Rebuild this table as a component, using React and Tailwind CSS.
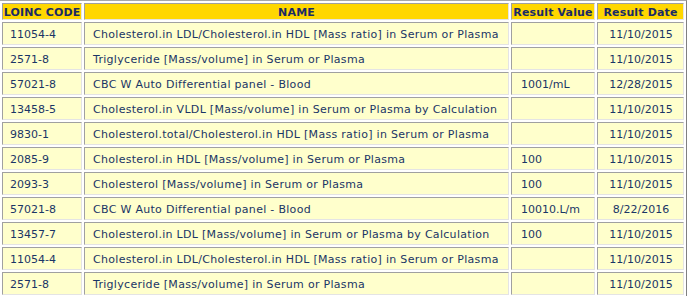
import React from "react";

const rows = [
  ["11054-4", "Cholesterol.in LDL/Cholesterol.in HDL [Mass ratio] in Serum or Plasma", "", "11/10/2015"],
  ["2571-8", "Triglyceride [Mass/volume] in Serum or Plasma", "", "11/10/2015"],
  ["57021-8", "CBC W Auto Differential panel - Blood", "1001/mL", "12/28/2015"],
  ["13458-5", "Cholesterol.in VLDL [Mass/volume] in Serum or Plasma by Calculation", "", "11/10/2015"],
  ["9830-1", "Cholesterol.total/Cholesterol.in HDL [Mass ratio] in Serum or Plasma", "", "11/10/2015"],
  ["2085-9", "Cholesterol.in HDL [Mass/volume] in Serum or Plasma", "100", "11/10/2015"],
  ["2093-3", "Cholesterol [Mass/volume] in Serum or Plasma", "100", "11/10/2015"],
  ["57021-8", "CBC W Auto Differential panel - Blood", "10010.L/m", "8/22/2016"],
  ["13457-7", "Cholesterol.in LDL [Mass/volume] in Serum or Plasma by Calculation", "100", "11/10/2015"],
  ["11054-4", "Cholesterol.in LDL/Cholesterol.in HDL [Mass ratio] in Serum or Plasma", "", "11/10/2015"],
  ["2571-8", "Triglyceride [Mass/volume] in Serum or Plasma", "", "11/10/2015"],
];

const cell =
  "border border-t-[#a0a0a0] border-l-[#a0a0a0] border-b-[#e4e4e4] border-r-[#e4e4e4] flex items-center whitespace-nowrap overflow-hidden";

export default function App() {
  return (
    <div
      className="w-[690px] h-[296px] overflow-hidden bg-white text-[11px] text-[#1a3566]"
      style={{ fontFamily: '"DejaVu Sans", Verdana, sans-serif' }}
    >
      <div className="w-[687px] border-t border-r border-b border-t-[#a8a8a8] border-r-[#808080] border-b-[#808080] pl-[2px] pr-[2px] pt-[2px] pb-[2px]">
        <div className="grid grid-cols-[80px_425px_84px_87px] auto-rows-[23px] grid-rows-[17px] gap-[2px]">
          <div className={`${cell} bg-[#ffd700] justify-center font-bold tracking-[0.15px] text-[#1a2a66] pt-[4px]`}>LOINC CODE</div>
          <div className={`${cell} bg-[#ffd700] justify-center font-bold tracking-[0.15px] text-[#1a2a66] pt-[4px]`}>NAME</div>
          <div className={`${cell} bg-[#ffd700] justify-center font-bold tracking-[0.15px] text-[#1a2a66] pt-[4px]`}>Result Value</div>
          <div className={`${cell} bg-[#ffd700] justify-center font-bold tracking-[0.15px] text-[#1a2a66] pt-[4px]`}>Result Date</div>
          {rows.map((r, i) => (
            <React.Fragment key={i}>
              <div className={`${cell} bg-[#ffffcc] pl-[7px] pt-[4px]`}>{r[0]}</div>
              <div className={`${cell} bg-[#ffffcc] pl-[8px] pt-[4px] tracking-[0.3px]`}>{r[1]}</div>
              <div className={`${cell} bg-[#ffffcc] pl-[9px] pt-[4px]`}>{r[2]}</div>
              <div className={`${cell} bg-[#ffffcc] justify-center pl-[1px] pt-[4px]`}>{r[3]}</div>
            </React.Fragment>
          ))}
        </div>
      </div>
    </div>
  );
}
